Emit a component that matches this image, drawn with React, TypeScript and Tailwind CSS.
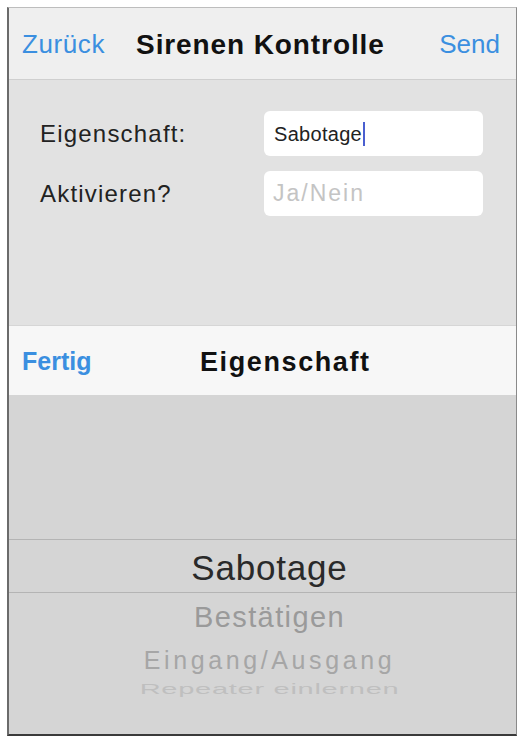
import React from 'react';

const font = { fontFamily: '"Liberation Sans", Arial, sans-serif' };

const App: React.FC = () => {
  return (
    <div className="w-[521px] h-[737px] bg-white pt-[7px] pl-[7px]" style={font}>
      <div className="w-[510px] h-[729px] flex flex-col border-l-2 border-l-[#6b6b6b] border-r border-r-[#8a8a8a] border-t border-t-[#bdbdbd] border-b-2 border-b-[#3a3a3a] overflow-hidden">
        {/* Nav bar */}
        <div className="h-[72px] shrink-0 bg-[#efefef] border-b border-[#cfcfcf] flex items-center px-[13px] pt-[2px]">
          <span className="text-[26px] tracking-[0.6px] text-[#3b8fe0]">Zurück</span>
          <span className="ml-[31px] text-[28px] font-semibold tracking-[0.9px] text-[#111]">Sirenen Kontrolle</span>
          <span className="ml-auto mr-[3px] text-[26px] text-[#3b8fe0]">Send</span>
        </div>

        {/* Form */}
        <div className="h-[245px] shrink-0 bg-[#e2e2e2] pt-[31px] px-[31px] flex flex-col gap-[15px]">
          <div className="flex items-center">
            <span className="w-[224px] text-[24px] tracking-[1.2px] text-[#222]">Eigenschaft:</span>
            <div className="w-[219px] h-[45px] bg-white rounded-[6px] flex items-center pl-[10px]">
              <span className="text-[20px] tracking-[0.3px] text-[#222]">Sabotage</span>
              <span className="w-[2px] h-[24px] bg-[#4a5fd0] ml-[1px]" />
            </div>
          </div>
          <div className="flex items-center">
            <span className="w-[224px] text-[24px] tracking-[1.2px] text-[#222]">Aktivieren?</span>
            <div className="w-[219px] h-[45px] bg-white rounded-[6px] flex items-center pl-[9px]">
              <span className="text-[23px] tracking-[2px] text-[#c4c4c4]">Ja/Nein</span>
            </div>
          </div>
        </div>

        {/* Toolbar */}
        <div className="h-[70px] shrink-0 bg-[#f7f7f7] border-t border-[#d6d6d6] flex items-center px-[13px] pt-[3px]">
          <span className="w-[178px] text-[25px] font-semibold text-[#3b8fe0]">Fertig</span>
          <span className="text-[27px] font-semibold tracking-[1.6px] text-[#111]">Eigenschaft</span>
        </div>

        {/* Picker */}
        <div className="flex-1 bg-[#d5d5d5] flex flex-col">
          <div className="h-[144px] shrink-0" />
          <div className="h-[54px] shrink-0 border-y border-[#b4b4b4] flex items-center justify-center pt-[4px] pl-[14px]">
            <span className="text-[35px] tracking-[0.8px] text-[#2a2a2a]">Sabotage</span>
          </div>
          <div className="flex flex-col items-center pl-[14px]">
            <span className="mt-[6px] text-[29px] tracking-[1.4px] text-[#9a9a9a] leading-[36px]">Bestätigen</span>
            <span className="mt-[10px] text-[25px] tracking-[3.6px] text-[#a6a6a6] leading-[30px]">Eingang/Ausgang</span>
            <span className="mt-[4px] text-[20px] text-[#bfbfbf] leading-[20px] scale-x-[1.45] scale-y-[0.75] tracking-[0.5px]">Repeater einlernen</span>
          </div>
        </div>
      </div>
    </div>
  );
};

export default App;
